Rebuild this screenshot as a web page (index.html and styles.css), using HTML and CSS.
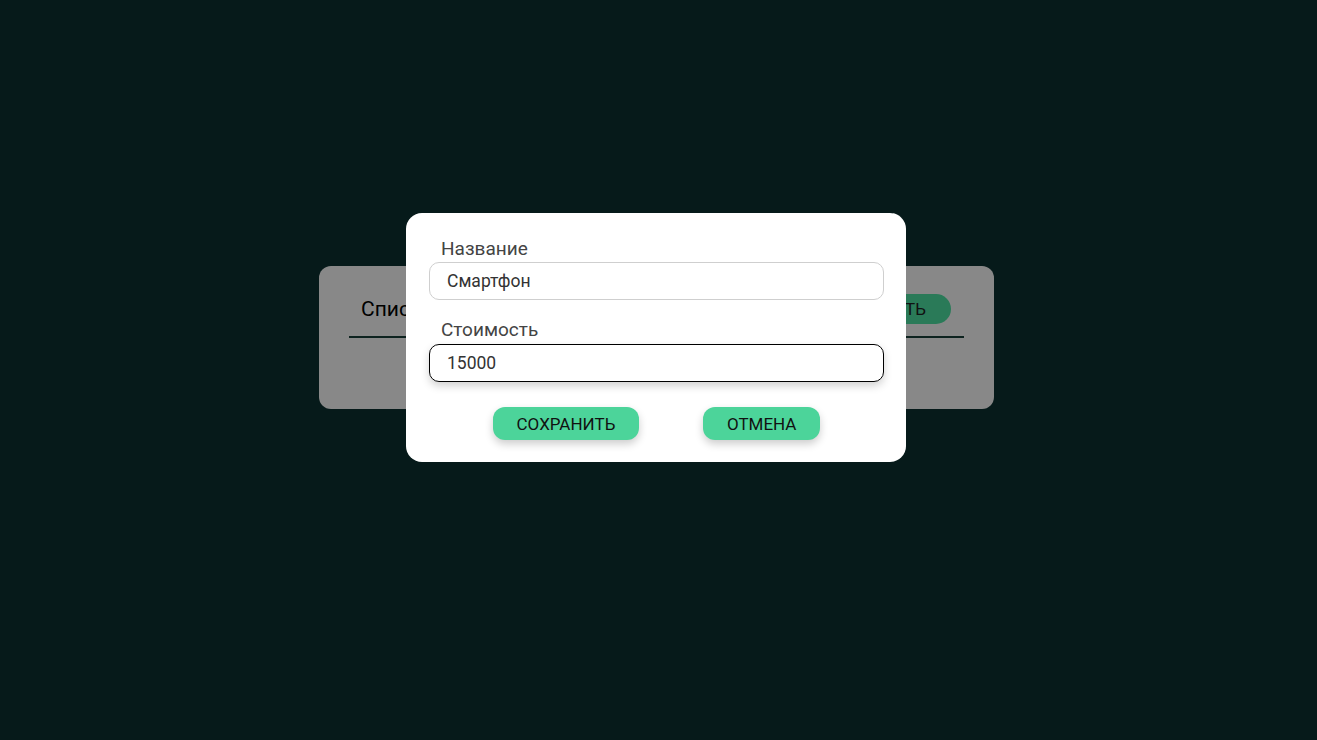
FILE: index.html
```html
<!DOCTYPE html>
<html lang="ru">
<head>
<meta charset="utf-8">
<title>Товары</title>
<link rel="stylesheet" href="styles.css">
</head>
<body>
<main class="page">
  <section class="card">
    <header class="card-head">
      <h1 class="card-title">Список товаров</h1>
      <button class="add-btn">Добавить</button>
    </header>
  </section>
</main>
<div class="overlay">
  <form class="modal">
    <label class="field-label">Название</label>
    <div class="input">Смартфон</div>
    <label class="field-label second">Стоимость</label>
    <div class="input focused">15000</div>
    <div class="actions">
      <button type="button" class="btn">Сохранить</button>
      <button type="button" class="btn">Отмена</button>
    </div>
  </form>
</div>
</body>
</html>
```
FILE: styles.css
```css
* { box-sizing: border-box; }
html, body { margin: 0; height: 100%; }
body {
  background: #061a1a;
  font-family: Roboto, "Liberation Sans", sans-serif;
  overflow: hidden;
}
.page {
  padding: 266px 0 0 319px;
}
.card {
  width: 675px;
  height: 143px;
  background: #888888;
  border-radius: 12px;
  padding: 28px 30px 0 30px;
}
.card-head {
  display: flex;
  justify-content: space-between;
  align-items: center;
  border-bottom: 2px solid #0d231f;
  padding: 0 13px 12px 12px;
}
.card-title {
  margin: 0;
  font-size: 21px;
  font-weight: 400;
  color: #000;
}
.add-btn {
  border: none;
  background: #2a7a58;
  color: #111;
  font-family: inherit;
  font-size: 17px;
  text-transform: uppercase;
  padding: 0 25px;
  border-radius: 15px;
  height: 30px;
}
.overlay {
  position: fixed;
  inset: 0;
  padding: 213px 0 0 406px;
}
.modal {
  width: 500px;
  background: #fff;
  border-radius: 16px;
  padding: 25px 22px 22px 23px;
  display: flex;
  flex-direction: column;
}
.field-label {
  font-size: 19px;
  line-height: 21px;
  color: #444;
  padding-left: 12px;
  margin-bottom: 3px;
}
.field-label.second {
  margin-top: 19px;
  margin-bottom: 4px;
}
.input {
  height: 38px;
  border: 1px solid #cfcfcf;
  border-radius: 10px;
  padding: 0 17px;
  font-size: 17.5px;
  line-height: 37px;
  color: #333;
}
.input.focused {
  border-color: #000;
  box-shadow: 0 4px 8px rgba(0, 0, 0, 0.18);
}
.actions {
  margin-top: 25px;
  display: flex;
  justify-content: space-evenly;
}
.btn {
  border: none;
  background: #4cd49a;
  color: #111;
  font-family: inherit;
  font-size: 17px;
  text-transform: uppercase;
  height: 33px;
  padding: 0 24px;
  border-radius: 12px;
  box-shadow: 0 4px 8px rgba(0, 0, 0, 0.2);
}
```
